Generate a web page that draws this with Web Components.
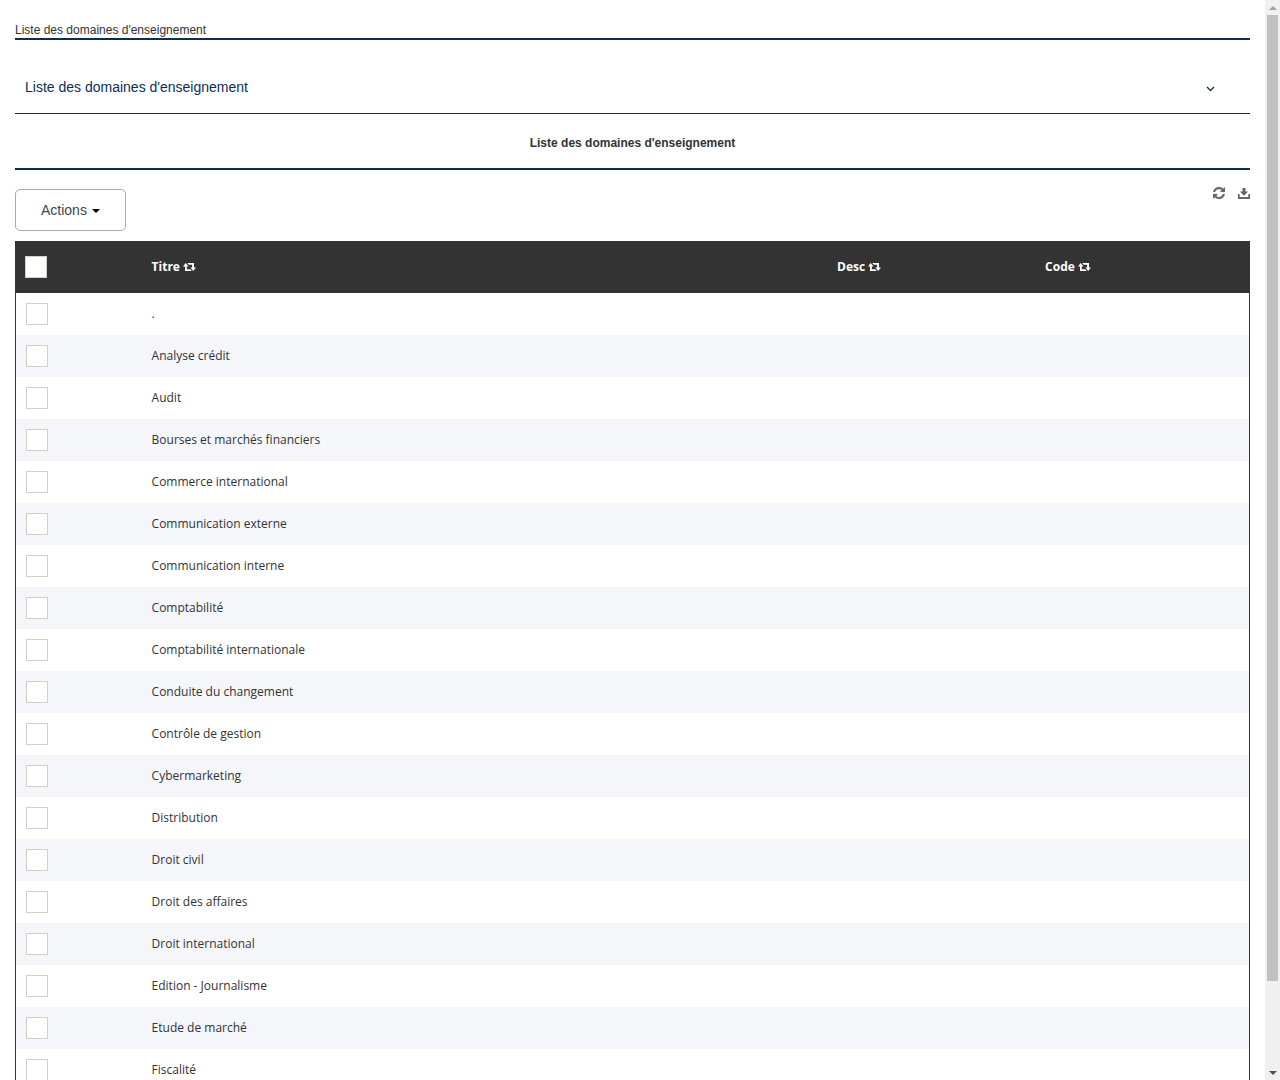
<!DOCTYPE html>
<html lang="fr">
<head>
<meta charset="utf-8">
<meta name="viewport" content="width=device-width, initial-scale=1">
<title>Liste des domaines d'enseignement</title>
<style>
  html, body { margin: 0; height: 100%; overflow: hidden; background: #fff; }
  body { font: 12px/16px "Liberation Sans", Arial, sans-serif; color: #333; --navy: #0b2f54; --dark: #333; }
</style>
</head>
<body>
<app-shell>
  <page-title>Liste des domaines d'enseignement</page-title>
  <accordion-bar>Liste des domaines d'enseignement</accordion-bar>
  <section-heading>Liste des domaines d'enseignement</section-heading>
  <list-toolbar></list-toolbar>
  <domain-table></domain-table>
</app-shell>

<script>
const define = (name, html, setup) => customElements.define(name, class extends HTMLElement {
  constructor() {
    super();
    const root = this.attachShadow({ mode: 'open' });
    root.innerHTML = html;
    if (setup) setup(root, this);
  }
});

define('app-icon', `
  <style>
    :host { display: inline-block; line-height: 0; }
    svg { display: block; fill: currentColor; }
  </style>`, (root, host) => {
  const icons = {
    retweet: [13, 8, '0 0 13 8', '<path d="M2.700 0L5.500 3.500H3.800V6.200H7.300L8.700 8H2V3.500H0zM10.200 8L7.300 4.500H9.100V1.800H5.700L4.300 0H11V4.500H13z"/>'],
    refresh: [12, 14, '128 0 1536 1792', '<path stroke="currentColor" stroke-width="30" d="M1639 1056q0 5-1 7-64 268-268 434.5t-478 166.5q-146 0-282.5-55t-243.5-157l-129 129q-19 19-45 19t-45-19-19-45v-448q0-26 19-45t45-19h448q26 0 45 19t19 45-19 45l-137 137q71 66 161 102t187 36q134 0 250-65t186-179q11-17 53-117 8-23 30-23h192q13 0 22.5 9.5t9.5 22.5zm25-800v448q0 26-19 45t-45 19h-448q-26 0-45-19t-19-45 19-45l138-138q-148-137-349-137-134 0-250 65t-186 179q-11 17-53 117-8 23-30 23h-199q-13 0-22.5-9.5t-9.5-22.5v-7q65-268 270-434.5t480-166.5q146 0 284 55.5t245 156.5l130-129q19-19 45-19t45 19 19 45z"/>'],
    download: [12, 14, '0 0 12 14', '<path d="M4.500 2h3v3.500h2.700L6 9.700 1.800 5.500h2.700zM0 8h1.700v3h8.600V8H12v5H0z"/>'],
    chevron: [9, 6, '0 0 9 6', '<path d="M1 1l3.500 3.500L8 1" fill="none" stroke="currentColor" stroke-width="1.300"/>'],
    caret: [8, 4, '0 0 8 4', '<path d="M0 0h8L4 4z"/>'],
    up: [8, 4, '0 0 8 4', '<path d="M4 0l4 4H0z"/>']
  };
  const [w, h, box, shape] = icons[host.getAttribute('name')];
  root.innerHTML += `<svg width="${w}" height="${h}" viewBox="${box}" aria-hidden="true">${shape}</svg>`;
});

define('scroll-track', `
  <style>
    :host { display: flex; flex-direction: column; align-items: center; flex: none; width: 15px; background: #f0f0f0; }
    .arrow { flex: none; height: 15px; display: flex; align-items: center; color: #505050; }
    .arrow.off { color: #a0a0a0; }
    .run { flex: 1; width: 11px; }
    .thumb { height: 92%; background: #c1c1c1; }
  </style>
  <span class="arrow off"><app-icon name="up"></app-icon></span>
  <div class="run"><div class="thumb"></div></div>
  <span class="arrow"><app-icon name="caret"></app-icon></span>`);

define('app-shell', `
  <style>
    :host { display: flex; height: 100vh; }
    main { flex: 1; min-width: 0; box-sizing: border-box; padding: 22px 15px 0; overflow-y: auto; scrollbar-width: none; }
  </style>
  <main><slot></slot></main>
  <scroll-track></scroll-track>`);

define('page-title', `
  <style>
    :host { display: block; border-bottom: 2px solid var(--navy); }
  </style>
  <slot></slot>`);

define('accordion-bar', `
  <style>
    :host { display: block; margin-top: 20px; border-bottom: 1px solid var(--navy); }
    button { display: flex; justify-content: space-between; align-items: center; width: 100%; border: 0; margin: 0;
      padding: 19px 35px 18px 10px; background: none; color: var(--navy); font: 14px/16px "Liberation Sans", Arial, sans-serif; text-align: left; }
    app-icon { padding-top: 4px; }
  </style>
  <button type="button" aria-expanded="false"><span><slot></slot></span><app-icon name="chevron"></app-icon></button>`);

define('section-heading', `
  <style>
    :host { display: block; border-bottom: 2px solid var(--navy); }
    h2 { margin: 0; padding: 21px 0 17px; font-size: 12px; line-height: 16px; text-align: center; }
  </style>
  <h2><slot></slot></h2>`);

define('list-toolbar', `
  <style>
    :host { display: flex; justify-content: space-between; align-items: flex-start; padding: 19px 0 10px; }
    button { background: none; margin: 0; }
    .menu { display: flex; align-items: center; gap: 5px; height: 42px; padding: 0 25px; border: 1px solid #aaa; border-radius: 5px;
      color: #444; font: 14px/20px "Liberation Sans", Arial, sans-serif; }
    .menu app-icon { color: #000; padding-top: 2px; }
    .tools { display: flex; gap: 13px; color: #666; }
    .tools button { border: 0; padding: 0; color: inherit; line-height: 0; }
    .tools app-icon { margin-top: -3px; }
  </style>
  <button type="button" class="menu" aria-haspopup="menu">Actions <app-icon name="caret"></app-icon></button>
  <div class="tools">
    <button type="button" aria-label="Actualiser"><app-icon name="refresh"></app-icon></button>
    <button type="button" aria-label="Exporter"><app-icon name="download"></app-icon></button>
  </div>`);

define('check-box', `
  <style>
    :host { display: block; }
    input { appearance: none; display: block; box-sizing: border-box; width: 22px; height: 22px; margin: 0; border: 1px solid #d6cec6; background: #fff; }
    input:checked { background: var(--navy); }
  </style>
  <input type="checkbox">`, (root, host) => {
  root.querySelector('input').setAttribute('aria-label', host.getAttribute('label'));
});

define('domain-table', `
  <style>
    :host { display: block; font-family: "Open Sans", sans-serif; }
    table { width: 100%; table-layout: fixed; border-collapse: separate; border-spacing: 0; }
    .c-check { width: 10.25%; } .c-title { width: 55.5%; } .c-desc { width: 16.85%; }
    th, td { box-sizing: border-box; padding: 0 10px; text-align: left; }
    th { height: 52px; background: var(--dark); color: #fff; }
    th button { display: flex; align-items: center; gap: 3px; border: 0; margin: 0; padding: 0; background: none; color: inherit; font: inherit; }
    td { height: 42px; }
    td:first-child { border-left: 1px solid var(--dark); }
    td:last-child { border-right: 1px solid var(--dark); }
    tbody tr:nth-child(even) { background: #f4f6fa; }
  </style>
  <table>
    <colgroup><col class="c-check"><col class="c-title"><col class="c-desc"><col></colgroup>
    <thead><tr>
      <th><check-box label="Tout sélectionner"></check-box></th>
      <th><button type="button">Titre <app-icon name="retweet"></app-icon></button></th>
      <th><button type="button">Desc <app-icon name="retweet"></app-icon></button></th>
      <th><button type="button">Code <app-icon name="retweet"></app-icon></button></th>
    </tr></thead>
    <tbody></tbody>
  </table>`, root => {
  const rows = ['.', 'Analyse crédit', 'Audit', 'Bourses et marchés financiers', 'Commerce international',
    'Communication externe', 'Communication interne', 'Comptabilité', 'Comptabilité internationale',
    'Conduite du changement', 'Contrôle de gestion', 'Cybermarketing', 'Distribution', 'Droit civil',
    'Droit des affaires', 'Droit international', 'Edition - Journalisme', 'Etude de marché', 'Fiscalité'];
  root.querySelector('tbody').innerHTML = rows.map(t =>
    `<tr><td><check-box label="${t}"></check-box></td><td>${t}</td><td></td><td></td></tr>`).join('');
});
</script>
</body>
</html>
